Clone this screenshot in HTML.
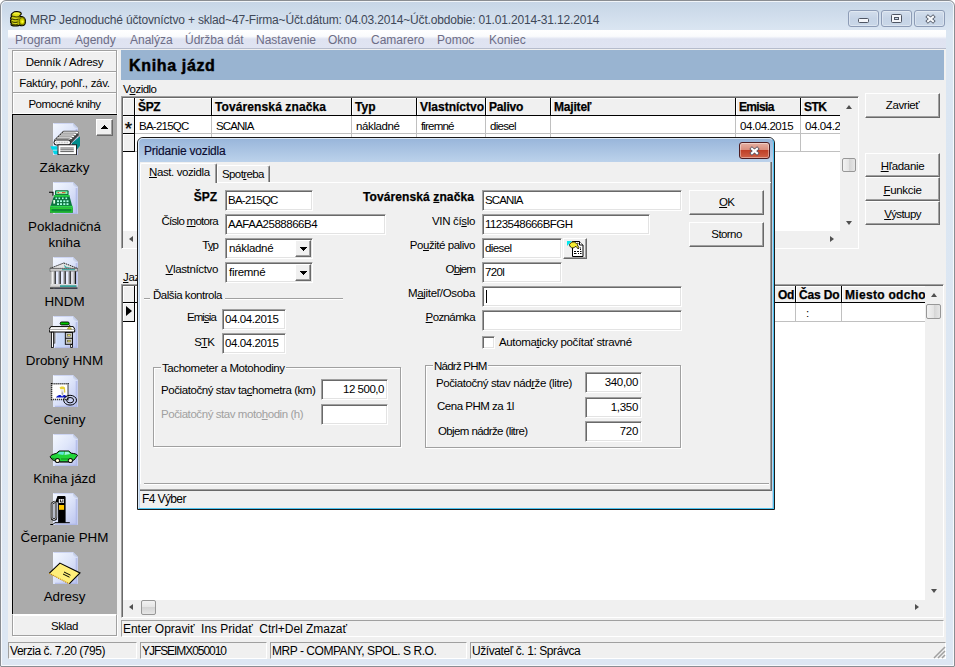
<!DOCTYPE html>
<html><head><meta charset="utf-8"><title>MRP</title>
<style>
*{box-sizing:border-box;margin:0;padding:0}
html,body{width:955px;height:667px;overflow:hidden;background:#fff}
body{font-family:"Liberation Sans",sans-serif;font-size:11.5px;letter-spacing:-.3px;color:#000;position:relative}
.a{position:absolute}
#win{left:0;top:0;width:955px;height:667px;border:1px solid #8a8d92;border-radius:6px 6px 1px 1px;background:linear-gradient(#c6d5e6 0,#dbe6f2 30px,#dde7f3 100%);overflow:hidden}
#win:before{content:"";position:absolute;left:0;top:0;right:0;bottom:0;border:1px solid rgba(255,255,255,.75);border-radius:5px 5px 1px 1px}
#client{left:8px;top:30px;width:938px;height:629px;background:#f0f0f0}
#title{left:30px;top:13px;font-size:12px;color:#404858;white-space:nowrap;letter-spacing:-.17px}
.cb{top:10px;width:31px;height:17px;border:1px solid #8d9cb6;border-radius:3px;background:linear-gradient(#d3deec,#c6d4e6 50%,#c9d7e8);box-shadow:inset 0 0 0 1px rgba(255,255,255,.35)}
#menu{left:8px;top:30px;width:938px;height:19px;background:linear-gradient(#fff 0,#fafbfd 35%,#dfe3f1 50%,#e0e4f2 100%);border-bottom:1px solid #b6bccc}
#menu span{position:absolute;top:3px;letter-spacing:0;font-size:12px;color:#6d6d86;white-space:nowrap}
.btn{background:#f0f0f0;border:1px solid;border-color:#fff #696969 #696969 #fff;box-shadow:inset -1px -1px 0 #a0a0a0;text-align:center;white-space:nowrap}
.sb{left:12px;width:105px;height:22px;line-height:19px;padding-top:2px;border-color:#a0a0a0;box-shadow:inset 1px 1px 0 #fff,1px 1px 0 #fff}
#gray{left:12px;top:114px;width:105px;height:500px;background:#ababab;border-left:1px solid #000;border-top:1px solid #000;box-shadow:inset 1px 1px 0 #b4b4b4}
.il{left:12px;width:105px;text-align:center;letter-spacing:0;font-size:13.4px;line-height:16px;color:#000}
#head{left:121px;top:50px;width:823px;height:30px;background:#99b4d1}
#head span{position:absolute;left:8px;top:6px;font-size:16px;line-height:20px;font-weight:bold;letter-spacing:.65px;-webkit-text-stroke:.45px #000}
.grid{background:#fff;border:1px solid #7a7a7a;overflow:hidden}
.gh{position:absolute;top:0;height:18px;background:#f0f0f0;border-right:1px solid #000;border-bottom:1px solid #000;font-weight:bold;font-size:12px;-webkit-text-stroke:.25px #000;line-height:19px;padding-left:3px;white-space:nowrap;overflow:hidden;box-shadow:inset 1px 1px 0 #fff}
.gc{position:absolute;height:18px;border-right:1px solid #c0c0c0;border-bottom:1px solid #c0c0c0;line-height:21px;padding-left:4px;white-space:nowrap;overflow:hidden}
.sbar{background:#f0f0f0}
.thumb{border:1px solid #979797;border-radius:2px;background:linear-gradient(90deg,#f2f2f2,#e4e4e4 50%,#d4d4d4 50%,#e6e6e6)}
.st{top:642px;height:17px;border:1px solid;border-color:#a0a0a0 #fff #fff #a0a0a0;letter-spacing:0;font-size:12px;line-height:17px;padding-left:1px;white-space:nowrap;overflow:hidden}
/* dialog */
#dlg{left:137px;top:137px;width:638px;height:373px;border-radius:6px 6px 0 0;background:linear-gradient(#98b5da 0,#bcd2eb 24px,#bfd4ed 100%);border:1px solid #1a1a1a;box-shadow:0 0 0 0 #000}
#dlg:before{content:"";position:absolute;left:0;top:0;right:0;bottom:0;border:1px solid #4fc3ef;border-top-color:#dbe8f6;border-left-color:#dcebf9;border-radius:5px 5px 0 0}
#dbody{left:1px;top:24px;width:634px;height:345px;background:#f0f0f0}
.lb{position:absolute;white-space:nowrap;text-align:right;line-height:14px}
.in{position:absolute;background:#fff;border:1px solid;border-color:#a0a0a0 #fff #fff #a0a0a0;box-shadow:inset 1px 1px 0 #696969,inset -1px -1px 0 #e3e3e3;line-height:18px;padding-left:2px;white-space:nowrap;overflow:hidden;height:21px}
.in.r{text-align:right;padding-right:3px}
u{text-decoration:underline}
.grp{position:absolute;border:1px solid #a0a0a0;box-shadow:1px 1px 0 #fff, inset 1px 1px 0 #fff}
.grp>b{position:absolute;left:7px;top:-6px;background:#f0f0f0;font-weight:normal;padding:0 1px;line-height:13px;white-space:nowrap}
.dd{position:absolute;right:1px;top:1px;width:16px;height:17px;background:#f0f0f0;border:1px solid;border-color:#fff #696969 #696969 #fff;box-shadow:inset -1px -1px 0 #a0a0a0}
.dd:after{content:"";position:absolute;left:7px;top:9px;width:1px;height:1px;background:#000;box-shadow:-1px -1px 0 #000,0 -1px 0 #000,1px -1px 0 #000,-2px -2px 0 #000,-1px -2px 0 #000,0 -2px 0 #000,1px -2px 0 #000,2px -2px 0 #000,-3px -3px 0 #000,-2px -3px 0 #000,-1px -3px 0 #000,0 -3px 0 #000,1px -3px 0 #000,2px -3px 0 #000,3px -3px 0 #000}
</style></head><body>
<div id="win" class="a"></div>
<div id="title" class="a" style="letter-spacing:-0.17px">MRP Jednoduché účtovníctvo + sklad~47-Firma~Účt.dátum: 04.03.2014~Účt.obdobie: 01.01.2014-31.12.2014</div>
<div class="a cb" style="left:848px"><svg class="a" style="left:9px;top:7px" width="12" height="6"><rect x=".5" y=".5" width="10" height="4" rx="1" fill="#f4f6fa" stroke="#4e5563" stroke-width="1"/></svg></div>
<div class="a cb" style="left:881px"><svg class="a" style="left:9px;top:3px" width="12" height="10"><rect x=".5" y=".5" width="10" height="8" rx="1" fill="#f4f6fa" stroke="#4e5563" stroke-width="1"/><rect x="3.500" y="3.500" width="4" height="2" fill="#c9d6e6" stroke="#4e5563" stroke-width="1"/></svg></div>
<div class="a cb" style="left:914px"><svg class="a" style="left:9px;top:3px" width="13" height="10" viewBox="0 0 13 10"><path d="M2.600 1.600l7.800 6.800M10.400 1.600L2.600 8.400" stroke="#4e5563" stroke-width="3.800"/><path d="M3.200 2.100l6.600 5.800M9.800 2.100L3.200 7.900" stroke="#f6f8fb" stroke-width="2.100"/></svg></div>
<div id="client" class="a"></div>
<div id="menu" class="a">
<span style="left:7px">Program</span><span style="left:67px">Agendy</span><span style="left:122px">Analýza</span><span style="left:177px">Údržba dát</span><span style="left:248px">Nastavenie</span><span style="left:320px">Okno</span><span style="left:363px">Camarero</span><span style="left:429px">Pomoc</span><span style="left:481px">Koniec</span>
</div>
<!-- MAIN -->

<div class="a btn sb" style="letter-spacing:-0.23px;top:50px">Denník / Adresy</div>
<div class="a btn sb" style="letter-spacing:-0.29px;top:71px">Faktúry, pohľ., záv.</div>
<div class="a btn sb" style="letter-spacing:-0.5px;top:92px;border-bottom-color:#fff">Pomocné knihy</div>
<div id="gray" class="a"></div>
<div class="a btn" style="left:96px;top:119px;width:17px;height:17px"><i class="a" style="left:7px;top:5px;width:1px;height:1px;background:#000;box-shadow:-1px 1px 0 #000,0 1px 0 #000,1px 1px 0 #000,-2px 2px 0 #000,-1px 2px 0 #000,0 2px 0 #000,1px 2px 0 #000,2px 2px 0 #000,-3px 3px 0 #000,-2px 3px 0 #000,-1px 3px 0 #000,0 3px 0 #000,1px 3px 0 #000,2px 3px 0 #000,3px 3px 0 #000"></i></div>
<div class="a il" style="top:160px">Zákazky</div>
<div class="a il" style="top:219px">Pokladničná<br>kniha</div>
<div class="a il" style="top:294px">HNDM</div>
<div class="a il" style="top:353px">Drobný HNM</div>
<div class="a il" style="top:412px">Ceniny</div>
<div class="a il" style="top:471px">Kniha jázd</div>
<div class="a il" style="top:530px">Čerpanie PHM</div>
<div class="a il" style="top:589px">Adresy</div>

<svg width="0" height="0" style="position:absolute"><defs>
<linearGradient id="pg" x1="0" y1="0" x2="1" y2="1"><stop offset="0" stop-color="#f4f8ff"/><stop offset=".45" stop-color="#dfe6fa"/><stop offset="1" stop-color="#b9c2ee"/></linearGradient>
<linearGradient id="pf" x1="0" y1="1" x2="1" y2="0"><stop offset="0" stop-color="#e8eefc"/><stop offset="1" stop-color="#8f9fcf"/></linearGradient>
<g id="page"><path d="M4 0h20l5 5v27H4z" fill="url(#pg)"/><path d="M4.5 0.5h19l5 5v26" fill="none" stroke="#cdd5f3" stroke-width="1"/><path d="M24 0l5 5h-5z" fill="url(#pf)"/><path d="M27.5 6v25.5H6" fill="none" stroke="#aab4e6" stroke-width="1.6" opacity=".7"/></g>
</defs></svg>
<!-- icon 1: Zakazky -->
<svg class="a" style="left:49px;top:123px" width="32" height="32" viewBox="0 0 32 32"><use href="#page"/>
<path d="M14 8.200L5 17.500v4h16l9-9.500-2.500-3.500z" fill="#444"/>
<path d="M23 20l8-6.800v9.500l-3.500 4.500H23z" fill="#008b8b"/>
<rect x="13.5" y="8.2" width="16" height="2.8" rx="1.4" fill="#fff" stroke="#000" stroke-width=".55"/><rect x="11.5" y="10.1" width="16" height="2.8" rx="1.4" fill="#fff" stroke="#000" stroke-width=".55"/><rect x="9.5" y="12.0" width="16" height="2.8" rx="1.4" fill="#fff" stroke="#000" stroke-width=".55"/><rect x="7.5" y="13.9" width="16" height="2.8" rx="1.4" fill="#fff" stroke="#000" stroke-width=".55"/><rect x="5.5" y="15.8" width="16" height="2.8" rx="1.4" fill="#fff" stroke="#000" stroke-width=".55"/>
<rect x="5" y="17" width="16.500" height="5" rx="2.400" fill="#f6f6f6" stroke="#000" stroke-width=".9"/>
<path d="M7 19.500h12" stroke="#bbb" stroke-width="1.500" stroke-dasharray=".8 .8"/>
<path d="M1.400 23.200h7v3.600h-5.500z" fill="#00d7e8"/><path d="M3.700 27.600h5.500v3.700H5z" fill="#00d7e8"/>
<rect x="9" y="21.800" width="18.500" height="10" fill="#fff" stroke="#111" stroke-width=".9"/>
<path d="M11.300 25h13.500M11.300 26.800h13.500M11.300 28.600h13.500" stroke="#333" stroke-width=".8"/>
</svg>
<!-- icon 2: cash register -->
<svg class="a" style="left:49px;top:182px" width="32" height="32" viewBox="0 0 32 32"><use href="#page"/>
<path d="M0 10.300h4v3.500" fill="none" stroke="#000" stroke-width="1.100"/>
<rect x="6" y="8.200" width="13.600" height="5" rx="1" fill="#0a6b3a"/>
<rect x="7.200" y="9.300" width="11.200" height="2.800" fill="#7dffb0"/><rect x="8.500" y="10" width="8" height="1.300" fill="#c63"/><rect x="10" y="10" width="3" height=".7" fill="#fff"/>
<path d="M5.200 13h15l3 11H1.600z" fill="#0b7340"/>
<path d="M5.200 13h15l.6 1.800H4.600z" fill="#25d040"/>
<g fill="#a8ffe0"><rect x="6.500" y="15.500" width="1.600" height="1.600"/><rect x="9.500" y="15.500" width="1.600" height="1.600"/><rect x="13" y="15.500" width="1.600" height="1.600"/><rect x="16.500" y="15.500" width="1.600" height="1.600"/>
<rect x="8" y="18.300" width="2" height="1.800"/><rect x="11" y="18.300" width="2" height="1.800"/><rect x="14.300" y="18.300" width="2" height="1.800"/><rect x="17.500" y="18.300" width="2" height="1.800"/>
<rect x="8" y="21.200" width="2" height="1.800"/><rect x="11" y="21.200" width="2" height="1.800"/><rect x="14.300" y="21.200" width="2" height="1.800"/><rect x="17.500" y="21.200" width="2" height="1.800"/>
<rect x="4.300" y="18" width="1.800" height="3.600" fill="#e8ffe8"/></g>
<rect x="1" y="23.800" width="22.800" height="2" fill="#2fd84a"/>
<rect x="1" y="25.600" width="22.800" height="5.200" fill="#0a5c30"/>
<rect x="1.800" y="26.300" width="21.200" height="3.800" fill="#0d8a35" stroke="#30e030" stroke-width="1"/>
</svg>
<!-- icon 3: bank -->
<svg class="a" style="left:49px;top:257px" width="32" height="32" viewBox="0 0 32 32"><use href="#page"/>
<path d="M14.800 6L28.600 11.400H1z" fill="#e4e4e4" stroke="#222" stroke-width="1" stroke-dasharray="1.400 .7"/>
<path d="M15 7.500l2 2.200 6 .8-7 .3z" fill="#1c9a94"/>
<rect x="1" y="11.400" width="27.600" height="2.800" fill="#c8c8c8" stroke="#555" stroke-width=".6"/>
<rect x="13" y="12.200" width="13" height="1" fill="#2a9d98"/>
<rect x="2.200" y="14.300" width="24.800" height="12.800" fill="#1a1a1a"/>
<g><rect x="2.200" y="14.300" width="3.200" height="12.800" fill="#f0f0f0"/><rect x="6.800" y="14.300" width="3.600" height="12.800" fill="#e6ecff"/><rect x="11.800" y="14.300" width="3.600" height="12.800" fill="#e6ecff"/><rect x="16.800" y="14.300" width="3.600" height="12.800" fill="#e6ecff"/><rect x="21.800" y="14.300" width="3.800" height="12.800" fill="#e0e0e8"/>
<rect x="4.600" y="14.300" width="1" height="12.800" fill="#999"/><rect x="9.400" y="14.300" width="1" height="12.800" fill="#999"/><rect x="14.400" y="14.300" width="1" height="12.800" fill="#999"/><rect x="19.400" y="14.300" width="1" height="12.800" fill="#999"/><rect x="24.600" y="14.300" width="1" height="12.800" fill="#999"/></g>
<rect x="1.600" y="27" width="26.400" height="2" fill="#dcdcdc"/>
<rect x="1" y="28.800" width="27.600" height="2" fill="#c0c0c0"/><rect x="11" y="28.300" width="16.500" height="1.600" fill="#2a9d98"/>
<rect x="1" y="30.500" width="27.600" height="1.200" fill="#111"/>
</svg>
<!-- icon 4: desk -->
<svg class="a" style="left:49px;top:316px" width="32" height="32" viewBox="0 0 32 32"><use href="#page"/>
<rect x="7.500" y="17" width="9" height="14" fill="#c4d6f6" opacity=".8"/>
<rect x="11.200" y="6" width="9" height="2.900" rx="1.400" fill="#00c800" stroke="#000" stroke-width=".9"/>
<path d="M20 8.700c.8.400.9 1.300.9 2.500" stroke="#000" stroke-width=".9" fill="none"/>
<path d="M1.800 10.600h22.500l1.400 2.600v2.800H.3v-2.800z" fill="#fff" stroke="#000" stroke-width="1"/>
<path d="M.5 13.500h25" stroke="#999" stroke-width=".8"/><path d="M3 12.500l1-1.500h11l-1 1.500z" fill="#e8e8e8"/>
<path d="M18.400 13l1.800-2.200 2.400 2.200z" fill="#e6d84a" stroke="#6b6400" stroke-width=".5"/>
<rect x="2.500" y="16.200" width="1.900" height="15.300" fill="#fff" stroke="#000" stroke-width=".8"/>
<rect x="5" y="16.200" width="1" height="11" fill="#bbb" stroke="#333" stroke-width=".5"/>
<rect x="16.300" y="16.500" width="7.200" height="11.800" fill="#c8c8c8" stroke="#000" stroke-width=".9"/>
<path d="M16.300 22.300h7.200" stroke="#000" stroke-width=".9"/>
<rect x="18.400" y="18.400" width="3.200" height="1.700" fill="#f3e860" stroke="#333" stroke-width=".4"/><rect x="18.400" y="24.200" width="3.200" height="1.700" fill="#f3e860" stroke="#333" stroke-width=".4"/>
<rect x="21.700" y="28.300" width="1.800" height="3.200" fill="#fff" stroke="#000" stroke-width=".8"/>
</svg>
<!-- icon 5: stamp -->
<svg class="a" style="left:49px;top:375px" width="32" height="32" viewBox="0 0 32 32"><use href="#page"/>
<rect x="2.600" y="8.800" width="16.400" height="15.800" fill="#fff" stroke="#000" stroke-width="1.500" stroke-dasharray="1 1"/>
<rect x="4.500" y="10.700" width="12.600" height="12" fill="#fff"/>
<path d="M10.500 12.500c1-1.500 4.500-1.500 5.500 0l.4 5-1.200.2-.5-3.500h-3.200z" fill="#e8d23a"/>
<path d="M11.500 14.500h3.500l-.5 6h-2z" fill="#e8e8e8"/><path d="M13 16l1.200 2.500-.6 2.500-1-2.500z" fill="#aaa"/>
<path d="M7 22.500c1-2 3-2.500 4.500-2.500l1.600 1.600 1.600-1.600c1.500 0 2.500.5 3 2.500z" fill="#0a18c8"/>
<ellipse cx="21.100" cy="25.200" rx="6.400" ry="4.900" fill="none" stroke="#000" stroke-width="1"/>
<ellipse cx="21.100" cy="25.200" rx="3.500" ry="2.700" fill="none" stroke="#000" stroke-width="1"/>
</svg>
<!-- icon 6: car -->
<svg class="a" style="left:49px;top:434px" width="32" height="32" viewBox="0 0 32 32"><use href="#page"/>
<path d="M1.200 23c0-1.500 3-3 6-3.500l3-2.500h9.500l2.500 2.200c3 .3 6 .8 6.300 2.300l-3.500 4.500-5 1.800H8l-4.500-2z" fill="#22d43a" stroke="#000" stroke-width="1"/>
<path d="M8.500 20l2.300-2.200h4.500l-1 3.200z" fill="#5fe8d8"/><path d="M16 17.800h3.300l2 2.200-5.800 1z" fill="#9af4e0"/>
<path d="M3 24l4 1.500M12 25h7" stroke="#0a8a1c" stroke-width="1"/>
<circle cx="8.500" cy="26.500" r="2.600" fill="#111"/><circle cx="21.400" cy="26.500" r="2.600" fill="#111"/>
<circle cx="8.500" cy="26.500" r="1.600" fill="#ffffd0"/><circle cx="21.400" cy="26.500" r="1.600" fill="#ffffd0"/>
<path d="M11 28.500h8" stroke="#555" stroke-width=".8"/>
</svg>
<!-- icon 7: pump -->
<svg class="a" style="left:49px;top:493px" width="32" height="32" viewBox="0 0 32 32"><use href="#page"/>
<path d="M8.500 3h7.500l.6 1v25.700H9.100V9.500H6.100z" fill="#000"/>
<rect x="9.800" y="6" width="5.200" height="4" fill="#e8e8e8"/><path d="M11.500 6.500v2.500h1.500M13.800 6.500v3" stroke="#000" stroke-width=".8" fill="none"/>
<rect x="10" y="12" width="5.100" height="4.800" fill="#ffc800"/>
<path d="M6.200 8.500c-1 1-3 1.200-3.200 2.200v14c0 2.400 4 2.400 4 0V10" fill="none" stroke="#000" stroke-width="2.400"/>
<path d="M6.200 8.500c-1 1-3 1.200-3.200 2.200v14c0 2.400 4 2.400 4 0V10" fill="none" stroke="#fff" stroke-width=".9"/>
<path d="M1.300 31.500h2.700l1.800-1.800h15" fill="none" stroke="#000" stroke-width="1"/>
</svg>
<!-- icon 8: envelope -->
<svg class="a" style="left:49px;top:552px" width="32" height="32" viewBox="0 0 32 32"><use href="#page"/>
<path d="M10.900 11.100L31 21 20.200 31.800.2 21.300z" fill="#ffee7a"/>
<path d="M.2 21.300L10.900 11.100 31 21 20.200 31.800" fill="none" stroke="#000" stroke-width="1.100"/>
<path d="M.2 21.300l20 10.500" fill="none" stroke="#c88a00" stroke-width="1.100" stroke-dasharray="1.200 .8"/>
<path d="M15 20l6.500 3.200M14 22l6.500 3.200" stroke="#000" stroke-width="1"/>
</svg>
<!-- coin icon -->
<svg class="a" style="left:10px;top:11px" width="16" height="16" viewBox="0 0 16 16">
<path d="M3 1.600C4.500 .400 8.500 .400 10.300 1.300c1.200.7 1.200 1.800.2 2.600l-.8.700c.4.300.6.700.5 1.100 2.500-.800 5.300 1 5.300 4.500 0 3-1.600 4.600-3.600 4.600-.9 0-1.600-.3-2.100-.8-.5.500-1.400.9-2.800.9H3.500c-1.400 0-2.500-.700-2.500-1.600 0-.5.200-.9.500-1.200C.500 11.500.200 10.800.300 10c.1-.6.400-1 .9-1.300C.700 8.300.500 7.700.600 7c.1-.7.600-1.200 1.200-1.500-.5-.4-.7-1-.6-1.700.1-.9.800-1.600 1.800-2.200z" fill="#b0b000" stroke="#050500" stroke-width="1.100"/>
<ellipse cx="6.600" cy="2.700" rx="3.700" ry="1.200" fill="#e8e818"/>
<path d="M4 2.300c1.500-.5 3.500-.5 5 0" stroke="#fdfd80" stroke-width=".7" fill="none"/>
<path d="M2.300 4.800c2.200 1.300 5.800 1.300 7.600.1M1.600 7.600c2 1.200 5 1.300 6.800.5M1.400 10.300c1.800 1.100 4.600 1.200 6.200.6M1.800 12.900c1.800.9 4.400 1 6 .5" stroke="#4a4a00" stroke-width="1.200" fill="none"/>
<path d="M2.600 3.900c2 .9 5 .9 6.800.1M2 6.700c1.800.8 4.300.9 5.800.4M1.800 9.400c1.600.8 3.800.9 5.400.4M2.200 12c1.500.7 3.600.8 5 .4" stroke="#ecec30" stroke-width=".8" fill="none"/>
<ellipse cx="12.100" cy="10.200" rx="2.900" ry="3.700" fill="#c6c600" stroke="#5e5e00" stroke-width=".9"/>
<ellipse cx="12.400" cy="10.400" rx="1.500" ry="2" fill="#e6e600"/>
<circle cx="12.500" cy="10.700" r=".9" fill="#fafa50"/>
</svg>
<div class="a btn sb" style="letter-spacing:-0.34px;top:614px;height:22px;border-top-color:#fff">Sklad</div>
<div id="head" class="a"><span>Kniha jázd</span></div>
<div class="a" style="letter-spacing:-0.52px;left:123px;top:83px">V<u>o</u>zidlo</div>
<!-- grid 1 -->
<div class="a" style="left:121px;top:96px;width:738px;height:153px;border:1px solid;border-color:#a0a0a0 #fff #fff #a0a0a0"></div>
<div class="a" style="left:122px;top:97px;width:736px;height:151px;background:#f0f0f0;border-left:1px solid #696969;border-top:1px solid #696969"></div><div class="a" style="left:123px;top:98px;width:717px;height:133px;background:#fff"></div>
<div id="g1" class="a" style="left:123px;top:98px;width:717px;height:133px;overflow:hidden">
<div class="gh" style="left:0;width:12px"></div>
<div class="gh" style="letter-spacing:-0.32px;left:12px;width:77px">ŠPZ</div>
<div class="gh" style="letter-spacing:0.11px;left:89px;width:140px">Továrenská značka</div>
<div class="gh" style="letter-spacing:0.02px;left:229px;width:65px">Typ</div>
<div class="gh" style="letter-spacing:-0.0px;left:294px;width:69px">Vlastníctvo</div>
<div class="gh" style="letter-spacing:-0.21px;left:363px;width:65px">Palivo</div>
<div class="gh" style="letter-spacing:-0.19px;left:428px;width:185px">Majiteľ</div>
<div class="gh" style="letter-spacing:-0.66px;left:613px;width:65px">Emisia</div>
<div class="gh" style="letter-spacing:-0.5px;left:678px;width:66px">STK</div>
<div class="gh" style="left:0;top:18px;width:12px;padding:0;text-align:center;font-weight:normal;font-size:19px;line-height:25px;letter-spacing:0">*</div>
<div class="gh" style="left:0;top:36px;width:12px"></div>
<div class="gc" style="letter-spacing:-0.76px;left:12px;top:18px;width:77px">BA-215QC</div>
<div class="gc" style="letter-spacing:-0.9px;left:89px;top:18px;width:140px">SCANIA</div>
<div class="gc" style="letter-spacing:-0.38px;left:229px;top:18px;width:65px">nákladné</div>
<div class="gc" style="letter-spacing:-0.83px;left:294px;top:18px;width:69px">firemné</div>
<div class="gc" style="letter-spacing:-0.71px;left:363px;top:18px;width:65px">diesel</div>
<div class="gc" style="left:428px;top:18px;width:185px"></div>
<div class="gc" style="letter-spacing:-0.43px;left:613px;top:18px;width:65px">04.04.2015</div>
<div class="gc" style="letter-spacing:-0.43px;left:678px;top:18px;width:66px">04.04.2015</div>
<div class="gc" style="left:12px;top:36px;width:77px"></div>
<div class="gc" style="left:89px;top:36px;width:140px"></div>
<div class="gc" style="left:229px;top:36px;width:65px"></div>
<div class="gc" style="left:294px;top:36px;width:69px"></div>
<div class="gc" style="left:363px;top:36px;width:65px"></div>
<div class="gc" style="left:428px;top:36px;width:185px"></div>
<div class="gc" style="left:613px;top:36px;width:65px"></div>
<div class="gc" style="left:678px;top:36px;width:66px"></div>
</div>
<!-- scrollbars grid1 -->
<div class="a sbar" style="left:840px;top:98px;width:18px;height:133px"></div>
<div class="a sbar" style="left:123px;top:231px;width:735px;height:17px"></div>
<i class="a" style="left:845.5px;top:105px;border:3.5px solid transparent;border-bottom:4px solid #505050;border-top:0"></i>
<i class="a" style="left:845.5px;top:221px;border:3.5px solid transparent;border-top:4px solid #505050;border-bottom:0"></i>
<div class="a thumb" style="left:842px;top:158px;width:14px;height:14px"></div>
<i class="a" style="left:129px;top:235.5px;border:3.5px solid transparent;border-right:4px solid #505050;border-left:0"></i>
<i class="a" style="left:830px;top:235.5px;border:3.5px solid transparent;border-left:4px solid #505050;border-right:0"></i>
<!-- right buttons -->
<div class="a btn" style="letter-spacing:-0.41px;left:865px;top:93px;width:75px;height:25px;line-height:22px">Zavrieť</div>
<div class="a btn" style="letter-spacing:-0.32px;left:865px;top:153px;width:75px;height:24px;line-height:24px"><u>H</u>ľadanie</div>
<div class="a btn" style="letter-spacing:-0.3px;left:865px;top:177px;width:75px;height:24px;line-height:24px"><u>F</u>unkcie</div>
<div class="a btn" style="letter-spacing:-0.6px;left:865px;top:201px;width:75px;height:24px;line-height:24px"><u>V</u>ýstupy</div>
<!-- Jazdy -->
<div class="a" style="left:123px;top:271px"><u>J</u>azdy</div>
<div class="a" style="left:121px;top:284px;width:823px;height:334px;border:1px solid;border-color:#a0a0a0 #fff #fff #a0a0a0"></div>
<div class="a" style="left:122px;top:285px;width:821px;height:332px;background:#f0f0f0;border-left:1px solid #696969;border-top:1px solid #696969"></div><div class="a" style="left:123px;top:286px;width:803px;height:314px;background:#fff"></div>
<div id="g2" class="a" style="left:123px;top:286px;width:802px;height:314px;overflow:hidden">
<div class="gh" style="left:0;width:12px;height:17px"></div>
<div class="gh" style="left:12px;width:639px;height:17px"></div>
<div class="gh" style="left:651px;width:22px;height:17px;padding-left:4px">Od</div>
<div class="gh" style="letter-spacing:-0.15px;left:673px;width:46px;height:17px">Čas Do</div>
<div class="gh" style="left:719px;width:140px;height:17px;letter-spacing:.3px">Miesto odchodu</div>
<div class="gh" style="left:0;top:17px;width:12px;height:19px"><i class="a" style="left:3px;top:3px;border:5.5px solid transparent;border-left:6.5px solid #000;border-right:0"></i></div>
<div class="gc" style="left:651px;top:17px;width:22px;height:19px"></div>
<div class="gc" style="left:673px;top:17px;width:46px;height:19px;padding-left:10px">:</div>
<div class="gc" style="left:719px;top:17px;width:140px;height:19px"></div>
</div>
<div class="a sbar" style="left:925px;top:286px;width:18px;height:314px"></div>
<div class="a sbar" style="left:123px;top:600px;width:820px;height:17px"></div>
<i class="a" style="left:930.5px;top:293px;border:3.5px solid transparent;border-bottom:4px solid #505050;border-top:0"></i>
<i class="a" style="left:931px;top:589px;border:3.5px solid transparent;border-top:4px solid #505050;border-bottom:0"></i>
<div class="a thumb" style="left:926px;top:304px;width:15px;height:15px"></div>
<i class="a" style="left:129px;top:604px;border:3.5px solid transparent;border-right:4px solid #505050;border-left:0"></i>
<i class="a" style="left:915px;top:604px;border:3.5px solid transparent;border-left:4px solid #505050;border-right:0"></i>
<div class="a thumb" style="left:141px;top:600px;width:15px;height:15px;background:linear-gradient(#f2f2f2,#e4e4e4 50%,#d4d4d4 50%,#e6e6e6)"></div>
<!-- hint bar -->
<div class="a" style="left:121px;top:620px;width:823px;height:17px;border:1px solid;border-color:#a0a0a0 #fff #fff #a0a0a0;letter-spacing:-0.03px;font-size:12px;line-height:16px;padding-left:1px;white-space:pre">Enter Opraviť  Ins Pridať  Ctrl+Del Zmazať</div>
<!-- status -->
<div class="a st" style="letter-spacing:-0.45px;left:8px;width:129px">Verzia č. 7.20 (795)</div>
<div class="a st" style="letter-spacing:-1.06px;left:140px;width:127px">YJFSEIMX050010</div>
<div class="a st" style="letter-spacing:-0.46px;left:270px;width:197px">MRP - COMPANY, SPOL. S R.O.</div>
<div class="a st" style="letter-spacing:-0.42px;left:470px;width:476px">Užívateľ č. 1: Správca</div>
<svg class="a" style="left:933px;top:646px" width="13" height="13"><g stroke="#a0a0a0" stroke-width="1.5"><path d="M12 1L1 12M12 5L5 12M12 9L9 12"/></g></svg>

<!-- DIALOG -->

<div id="dlg" class="a"></div>
<div class="a" style="left:144px;top:144px;letter-spacing:-0.2px;font-size:12px;color:#0c0c30;-webkit-text-stroke:.15px #0c0c30;white-space:nowrap">Pridanie vozidla</div>
<div class="a" style="left:739px;top:142px;width:31px;height:17px;border:1px solid #4d1d22;border-radius:3px;background:linear-gradient(#e6b0a3 0,#da8e7d 46%,#bf3f27 50%,#cf6248 100%);box-shadow:inset 0 0 0 1px rgba(255,255,255,.4)">
<svg class="a" style="left:8px;top:3px" width="13" height="10" viewBox="0 0 13 10"><path d="M2.600 1.600l7.800 6.800M10.400 1.600L2.600 8.400" stroke="#55505e" stroke-width="3.800"/><path d="M3.200 2.100l6.600 5.800M9.800 2.100L3.200 7.900" stroke="#fff" stroke-width="2.100"/></svg></div>
<div class="a" style="left:140px;top:162px;width:632px;height:346px;background:#f0f0f0"></div>
<!-- panel bevel -->
<div class="a" style="left:140px;top:162px;width:632px;height:329px;border-right:1px solid #696969;border-bottom:1px solid #696969;box-shadow:inset -1px -1px 0 #a0a0a0"></div>
<!-- tab page -->
<div class="a" style="left:140px;top:182px;width:631px;height:302px;border-top:1px solid #fff;border-left:1px solid #fff"></div>
<div class="a" style="left:144px;top:483px;width:625px;height:2px;border-top:1px solid #a0a0a0;border-bottom:1px solid #fff"></div>
<div class="a" style="left:140px;top:163px;width:77px;height:20px;background:#f0f0f0;border:1px solid;border-color:#fff #696969 transparent #fff;border-radius:2px 2px 0 0;border-bottom:0;box-shadow:inset -1px 0 0 #a0a0a0;line-height:17px;padding-left:8px;white-space:nowrap;letter-spacing:-0.4px"><u>N</u>ast. vozidla</div>
<div class="a" style="left:217px;top:165px;width:53px;height:17px;background:#f0f0f0;border:1px solid;border-color:#fff #696969 transparent #fff;border-radius:2px 2px 0 0;border-bottom:0;box-shadow:inset -1px 0 0 #a0a0a0;line-height:17px;padding-left:4px;white-space:nowrap;letter-spacing:-0.61px">Spot<u>r</u>eba</div>
<!-- left column -->
<div class="lb" style="right:738px;top:190px;font-weight:bold;-webkit-text-stroke:.25px #000;font-size:12px;letter-spacing:-0.02px">ŠPZ</div>
<div class="in" style="letter-spacing:-0.74px;left:225px;top:190px;width:88px">BA-215QC</div>
<div class="lb" style="letter-spacing:-0.73px;right:737px;top:214px">Číslo <u>m</u>otora</div>
<div class="in" style="letter-spacing:-0.49px;left:225px;top:214px;width:161px">AAFAA2588866B4</div>
<div class="lb" style="letter-spacing:-0.9px;right:737px;top:238px">T<u>y</u>p</div>
<div class="in" style="left:225px;top:238px;width:88px;padding-left:3px">nákladné<span class="dd"></span></div>
<div class="lb" style="letter-spacing:-0.35px;right:737px;top:262px"><u>V</u>lastníctvo</div>
<div class="in" style="left:225px;top:262px;width:88px;padding-left:3px">firemné<span class="dd"></span></div>
<div class="a" style="left:144px;top:298px;width:199px;height:2px;border-top:1px solid #a0a0a0;border-bottom:1px solid #fff"></div>
<div class="a" style="letter-spacing:-0.47px;left:150px;top:288px;background:#f0f0f0;padding:0 3px;line-height:14px;white-space:nowrap">Ďalšia kontrola</div>
<div class="lb" style="letter-spacing:-0.9px;right:739px;top:310px">Emi<u>s</u>ia</div>
<div class="in" style="letter-spacing:-0.42px;left:222px;top:309px;width:64px;padding-left:2px">04.04.2015</div>
<div class="lb" style="letter-spacing:-0.9px;right:741px;top:335px">S<u>T</u>K</div>
<div class="in" style="letter-spacing:-0.42px;left:222px;top:333px;width:64px;padding-left:2px">04.04.2015</div>
<!-- right column -->
<div class="lb" style="right:481px;top:190px;font-weight:bold;-webkit-text-stroke:.25px #000;font-size:12px;letter-spacing:0.11px">Továrenská <u>z</u>načka</div>
<div class="in" style="letter-spacing:-0.87px;left:482px;top:190px;width:200px">SCANIA</div>
<div class="lb" style="letter-spacing:-0.34px;right:480px;top:214px">VIN čí<u>s</u>lo</div>
<div class="in" style="letter-spacing:-0.54px;left:482px;top:214px;width:168px">1123548666BFGH</div>
<div class="lb" style="letter-spacing:-0.46px;right:480px;top:238px">Po<u>u</u>žité palivo</div>
<div class="in" style="letter-spacing:-0.61px;left:482px;top:238px;width:80px">diesel</div>
<div class="a btn" style="left:563px;top:238px;width:24px;height:21px"><svg class="a" style="left:3px;top:2px" width="17" height="16" viewBox="0 0 17 16">
<path d="M5.500 .500h7l3.500 3.500v11.500H5.500z" fill="#fff" stroke="#000" stroke-width="1"/><path d="M12.500 .500v3.500h3.500" fill="#fff" stroke="#000" stroke-width="1"/>
<path d="M7 10.500h2M10 10.500h2M13 10.500h1.500M7 12.500h2.500M11 12.500h1M13 12.500h1.500M13 7h1M13 8.500h1" stroke="#000" stroke-width="1"/>
<path d="M0 0h5L0 5z" fill="#00e8f0"/>
<path d="M2.500 3.500c1-2 3-3 5-2.500l2 1.500 1-.5 .8 1-1 .8 1.700 3-.8 1.200-2.200-2.700-1.500 1-1.500.7c-2 0-3.500-1.500-3.500-3.500z" fill="#f4ec30" stroke="#000" stroke-width=".8"/>
</svg></div>
<div class="lb" style="letter-spacing:-0.9px;right:480px;top:262px">O<u>b</u>jem</div>
<div class="in" style="letter-spacing:-0.68px;left:482px;top:262px;width:80px">720l</div>
<div class="lb" style="letter-spacing:-0.31px;right:480px;top:286px">M<u>a</u>jiteľ/Osoba</div>
<div class="in" style="left:482px;top:286px;width:200px"><i class="a" style="left:3px;top:3px;width:1px;height:13px;background:#000"></i></div>
<div class="lb" style="letter-spacing:-0.62px;right:480px;top:310px"><u>P</u>oznámka</div>
<div class="in" style="left:482px;top:310px;width:200px"></div>
<div class="in" style="left:482px;top:336px;width:13px;height:13px"></div>
<div class="a" style="letter-spacing:-0.36px;left:499px;top:335px;line-height:14px;white-space:nowrap">Automa<u>t</u>icky počítať stravné</div>
<div class="a btn" style="letter-spacing:-0.9px;left:689px;top:190px;width:75px;height:25px;line-height:22px"><u>O</u>K</div>
<div class="a btn" style="letter-spacing:-0.58px;left:689px;top:222px;width:75px;height:25px;line-height:22px">Storno</div>
<!-- groups -->
<div class="grp" style="left:153px;top:367px;width:248px;height:80px"><b style="letter-spacing:-0.42px">Tachometer a Motohodiny</b></div>
<div class="a" style="letter-spacing:-0.42px;left:161px;top:383px;line-height:14px;white-space:nowrap">Počiatočný stav ta<u>c</u>hometra (km)</div>
<div class="in r" style="letter-spacing:-0.47px;left:321px;top:379px;width:67px">12 500,0</div>
<div class="a" style="letter-spacing:-0.43px;left:161px;top:407px;line-height:14px;white-space:nowrap;color:#a0a0a0">Počiatočný stav moto<u>h</u>odin (h)</div>
<div class="in r" style="left:321px;top:404px;width:67px"></div>
<div class="grp" style="left:425px;top:365px;width:256px;height:83px"><b style="letter-spacing:-0.75px">Nádrž PHM</b></div>
<div class="a" style="letter-spacing:-0.41px;left:436px;top:376px;line-height:14px;white-space:nowrap">Počiatočný stav nád<u>r</u>že (litre)</div>
<div class="in r" style="left:585px;top:372px;width:57px">340,00</div>
<div class="a" style="letter-spacing:-0.49px;left:437px;top:399px;line-height:14px;white-space:nowrap">Cena PHM za 1l</div>
<div class="in r" style="left:585px;top:397px;width:57px">1,350</div>
<div class="a" style="letter-spacing:-0.61px;left:438px;top:424px;line-height:14px;white-space:nowrap">Objem nádrže (litre)</div>
<div class="in r" style="left:585px;top:421px;width:57px">720</div>
<!-- dialog status -->
<div class="a" style="left:140px;top:491px;width:632px;height:17px;letter-spacing:-0.61px;font-size:12px;line-height:16px;padding-left:2px">F4 Výber</div>

</body></html>
